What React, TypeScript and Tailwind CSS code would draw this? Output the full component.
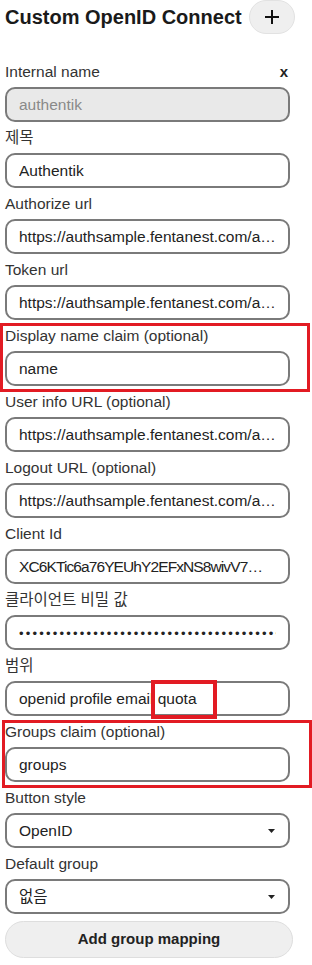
import React from "react";

const font = { fontFamily: '"Liberation Sans", Arial, "Noto Sans CJK KR", sans-serif' };

function Label({ children, right }: { children: React.ReactNode; right?: React.ReactNode }) {
  return (
    <div className="flex h-[31px] items-center justify-between pt-[1px] text-[15.5px] text-[#333]">
      <span>{children}</span>
      {right}
    </div>
  );
}

function Box({ children, disabled, select, clip }: { children: React.ReactNode; disabled?: boolean; select?: boolean; clip?: boolean }) {
  return (
    <div
      className={
        "flex h-[35px] w-[285px] items-center rounded-[10px] border-2 border-[#7a7a7a] pl-[12px] pr-[12px] text-[15.5px] " +
        (disabled ? "bg-[#e9e9e9] text-[#8a8a8a]" : "bg-white text-[#222]")
      }
    >
      <div className={"min-w-0 flex-1 whitespace-nowrap " + (clip ? "overflow-hidden" : "truncate")}>{children}</div>
      {select && (
        <svg width="7" height="4" viewBox="0 0 7 4" className="ml-2 mr-[1px]">
          <path d="M0 0H7L3.5 4Z" fill="#222" />
        </svg>
      )}
    </div>
  );
}

function Field({ label, value, disabled, select, right, clip }: { label: string; value: React.ReactNode; disabled?: boolean; select?: boolean; right?: React.ReactNode; clip?: boolean }) {
  return (
    <div>
      <Label right={right}>{label}</Label>
      <Box disabled={disabled} select={select} clip={clip}>{value}</Box>
    </div>
  );
}

export default function App() {
  const url = "https://authsample.fentanest.com/application/o/authorize/";
  return (
    <div className="min-h-[965px] w-[312px] bg-white px-[5px]" style={font}>
      <div className="flex h-[34px] items-center">
        <span className="text-[20px] font-bold text-[#1a1a1a]">Custom OpenID Connect</span>
        <div className="ml-[7px] flex h-[34px] w-[46px] items-center justify-center rounded-full border border-[#e2e2e2] bg-[#efefef]">
          <svg width="14" height="14" viewBox="0 0 14 14">
            <path d="M7 0V14M0 7H14" stroke="#111" strokeWidth="2" />
          </svg>
        </div>
      </div>
      <div className="h-[22px]" />
      <Field
        label="Internal name"
        value="authentik"
        disabled
        right={<span className="mr-[19px] text-[15px] font-bold text-[#222]">x</span>}
      />
      <Field label="제목" value="Authentik" />
      <Field label="Authorize url" value={url} />
      <Field label="Token url" value="https://authsample.fentanest.com/application/o/token/" />
      <div className="relative">
        <Field label="Display name claim (optional)" value="name" />
        <div className="pointer-events-none absolute bottom-[-6px] left-[-5px] right-[-3px] top-[3px] border-[3.5px] border-[#e21b23]" />
      </div>
      <Field label="User info URL (optional)" value="https://authsample.fentanest.com/application/o/userinfo/" />
      <Field label="Logout URL (optional)" value="https://authsample.fentanest.com/application/o/end-session/" />
      <Field
        label="Client Id"
        value={<span className="tracking-[-0.9px]">XC6KTic6a76YEUhY2EFxNS8wivV7WpQ3Zk</span>}
      />
      <Field
        label="클라이언트 비밀 값"
        clip
        value={<span className="text-[13px] tracking-[2.2px]">{"•".repeat(39)}</span>}
      />
      <div>
        <Label>범위</Label>
        <div className="relative">
          <Box>openid profile email quota</Box>
          <div className="pointer-events-none absolute left-[146px] top-[-1px] h-[39px] w-[66px] border-[4px] border-[#e21b23]" />
        </div>
      </div>
      <div className="relative">
        <Field label="Groups claim (optional)" value="groups" />
        <div className="pointer-events-none absolute bottom-[-6px] left-[-3px] right-[-5px] top-[4px] border-[3.5px] border-[#e21b23]" />
      </div>
      <Field label="Button style" value="OpenID" select />
      <Field label="Default group" value="없음" select />
      <div className="mt-[7px] flex h-[37px] w-[288px] items-center justify-center rounded-full border border-[#dedede] bg-[#efefef] text-[15px] font-bold text-[#222]">
        Add group mapping
      </div>
    </div>
  );
}
